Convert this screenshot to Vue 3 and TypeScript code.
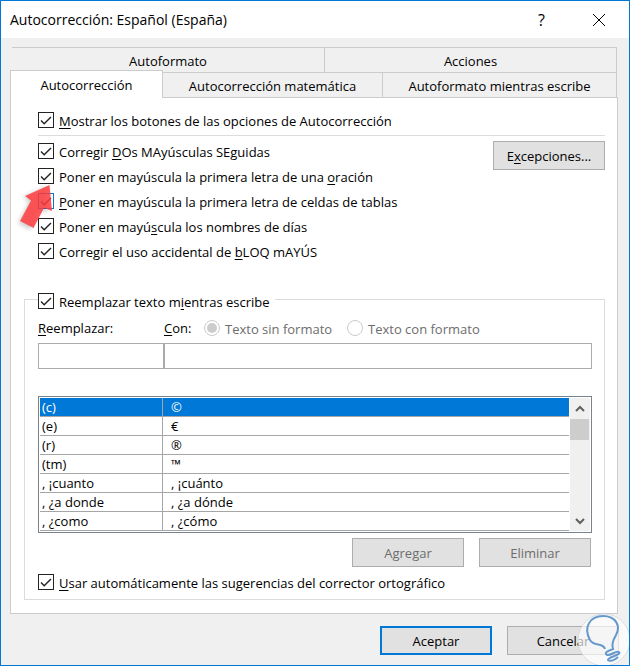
<script setup lang="ts">
import { ref } from 'vue'

interface Mnemonic {
  before: string
  key: string
  after: string
}

interface Option extends Mnemonic {
  id: string
  checked: boolean
  focused?: boolean
}

interface Entry {
  from: string
  to: string
}

const upperTabs: string[] = ['Autoformato', 'Acciones']
const lowerTabs: string[] = ['Autocorrección', 'Autocorrección matemática', 'Autoformato mientras escribe']
const activeTab = ref('Autocorrección')

const showButtons = ref(true)
const replaceText = ref(true)
const useSpelling = ref(true)
const format = ref('plain')
const replaceFrom = ref('')
const replaceTo = ref('')
const selected = ref(0)

const options = ref<Option[]>([
  { id: 'two-caps', before: 'Corregir ', key: 'D', after: 'Os MAyúsculas SEguidas', checked: true },
  { id: 'sentence', before: 'Poner en mayúscula la primera letra de una ', key: 'o', after: 'ración', checked: true },
  { id: 'cells', before: '', key: 'P', after: 'oner en mayúscula la primera letra de celdas de tablas', checked: true, focused: true },
  { id: 'days', before: 'Poner en mayú', key: 's', after: 'cula los nombres de días', checked: true },
  { id: 'caps-lock', before: 'Corregir el uso accidental de ', key: 'b', after: 'LOQ mAYÚS', checked: true },
])

const entries: Entry[] = [
  { from: '(c)', to: '©' },
  { from: '(e)', to: '€' },
  { from: '(r)', to: '®' },
  { from: '(tm)', to: '™' },
  { from: ', ¡cuanto', to: ', ¡cuánto' },
  { from: ', ¿a donde', to: ', ¿a dónde' },
  { from: ', ¿como', to: ', ¿cómo' },
]
</script>

<template>
  <main class="dialog">
    <header class="titlebar">
      <h1>Autocorrección: Español (España)</h1>
      <button class="caption-button" type="button" aria-label="Ayuda">?</button>
      <button class="caption-button" type="button" aria-label="Cerrar">
        <svg width="14" height="14" viewBox="0 0 14 14"><path d="M1 1L13 13M13 1L1 13" /></svg>
      </button>
    </header>

    <div class="body">
      <div class="tabs" role="tablist">
        <div class="tab-row upper">
          <button v-for="tab in upperTabs" :key="tab" type="button" role="tab" class="tab">{{ tab }}</button>
        </div>
        <div class="tab-row lower">
          <button
            v-for="tab in lowerTabs"
            :key="tab"
            type="button"
            role="tab"
            class="tab"
            :class="{ active: tab === activeTab }"
            :aria-selected="tab === activeTab"
          >{{ tab }}</button>
        </div>
      </div>

      <section class="panel">
        <div class="show-row">
          <label class="check">
            <span class="box">
              <input v-model="showButtons" type="checkbox" />
              <svg viewBox="0 0 16 16"><path d="M3 8.5L6.2 11.7L13 5" /></svg>
            </span>
            <span class="text"><u>M</u>ostrar los botones de las opciones de Autocorrección</span>
          </label>
        </div>

        <div class="options">
          <div class="option-list">
            <label v-for="option in options" :key="option.id" class="check">
              <span class="box" :class="{ focused: option.focused }">
                <input v-model="option.checked" type="checkbox" />
                <svg viewBox="0 0 16 16"><path d="M3 8.5L6.2 11.7L13 5" /></svg>
              </span>
              <span class="text">{{ option.before }}<u>{{ option.key }}</u>{{ option.after }}</span>
            </label>
          </div>
          <button class="push" type="button"><span>E<u>x</u>cepciones...</span></button>
        </div>

        <fieldset class="group">
          <legend>
            <label class="check">
              <span class="box">
                <input v-model="replaceText" type="checkbox" />
                <svg viewBox="0 0 16 16"><path d="M3 8.5L6.2 11.7L13 5" /></svg>
              </span>
              <span class="text">Reemplazar texto m<u>i</u>entras escribe</span>
            </label>
          </legend>

          <div class="columns captions">
            <label for="replace-from"><u>R</u>eemplazar:</label>
            <div class="with">
              <label for="replace-to" class="with-label"><u>C</u>on:</label>
              <label class="radio"><input v-model="format" type="radio" value="plain" disabled /><span>Texto sin formato</span></label>
              <label class="radio"><input v-model="format" type="radio" value="rich" disabled /><span>Texto con formato</span></label>
            </div>
          </div>
          <div class="columns">
            <input id="replace-from" v-model="replaceFrom" class="field" type="text" />
            <input id="replace-to" v-model="replaceTo" class="field" type="text" />
          </div>

          <div class="list">
            <table>
              <tbody>
                <tr
                  v-for="(entry, index) in entries"
                  :key="entry.from"
                  :class="{ selected: index === selected }"
                  @click="selected = index"
                >
                  <td>{{ entry.from }}</td>
                  <td>{{ entry.to }}</td>
                </tr>
              </tbody>
            </table>
            <div class="scrollbar">
              <button type="button" aria-label="Subir">
                <svg width="10" height="8" viewBox="0 0 10 8"><path d="M1 6L5 2L9 6" /></svg>
              </button>
              <div class="track"><div class="thumb"></div></div>
              <button type="button" aria-label="Bajar">
                <svg width="10" height="8" viewBox="0 0 10 8"><path d="M1 2L5 6L9 2" /></svg>
              </button>
            </div>
          </div>

          <div class="actions list-actions">
            <button class="push" type="button" disabled>Agregar</button>
            <button class="push" type="button" disabled>Eliminar</button>
          </div>

          <label class="check">
            <span class="box">
              <input v-model="useSpelling" type="checkbox" />
              <svg viewBox="0 0 16 16"><path d="M3 8.5L6.2 11.7L13 5" /></svg>
            </span>
            <span class="text"><u>U</u>sar automáticamente las sugerencias del corrector ortográfico</span>
          </label>
        </fieldset>
      </section>

      <footer class="actions footer">
        <button class="push default" type="button">Aceptar</button>
        <button class="push" type="button">Cancelar</button>
      </footer>
    </div>

    <svg class="pointer" width="44" height="52" viewBox="0 0 44 52" aria-hidden="true">
      <path class="shadow" d="M35 6L11 17L17 22L6 43L18 50L28 31L36 32Z" />
      <path class="arrow" d="M37.5 5L13 16L19 20.5L8 41L21.5 48L32 28L40 31Z" />
    </svg>

    <svg class="watermark" width="54" height="54" viewBox="0 0 54 54" aria-hidden="true">
      <circle cx="28" cy="28" r="26" />
      <path d="M29 37C27 30 18 35 14 28C7 15 14 4 27 4C40 4 45 14 40 23C36 30 36 33 37 37C31 39 28 41 31 43C35 44 40 38 43 40C46 43 31 45 32 48C34 50 39 48 42 45" />
    </svg>
  </main>
</template>

<style>
body {
  margin: 0;
}
</style>

<style scoped>
.dialog {
  box-sizing: border-box;
  position: relative;
  display: flex;
  flex-direction: column;
  min-height: 100vh;
  overflow: hidden;
  border: 1px solid #0078d7;
  background: #f0f0f0;
  color: #000;
  font-family: "Open Sans", "Noto Sans", sans-serif;
  font-size: 13px;
  line-height: 18px;
}

button,
input {
  box-sizing: border-box;
  margin: 0;
  font: inherit;
  color: inherit;
}

u {
  text-decoration-thickness: 1px;
  text-underline-offset: 2px;
}

.titlebar {
  display: flex;
  align-items: center;
  height: 37px;
  padding: 0 2px 0 9px;
  background: #fff;
}

.titlebar h1 {
  flex: 1;
  margin: 0;
  font-size: 14px;
  font-weight: 400;
}

.caption-button {
  display: grid;
  place-items: center;
  width: 57px;
  height: 36px;
  padding: 0;
  border: 0;
  background: none;
  font-size: 16px;
}

.caption-button svg {
  fill: none;
  stroke: #000;
}

.body {
  display: flex;
  flex: 1;
  flex-direction: column;
  padding: 9px 10px 10px 9px;
}

.tab-row {
  display: grid;
}

.upper {
  grid-template-columns: 313fr 292fr;
  margin: 0 2px 0 2px;
}

.lower {
  grid-template-columns: 153fr 220fr 234fr;
  margin-right: 2px;
}

.tab {
  height: 25px;
  padding: 2px 0 0;
  border: 0 solid #ccc;
  border-width: 1px 1px 0 0;
  background: #f0f0f0;
}

.tab.active {
  z-index: 1;
  height: 28px;
  margin: -2px 0 -1px;
  padding: 0;
  border-left-width: 1px;
  background: #fff;
}

.panel {
  margin-right: 1px;
  padding: 9px 12px 13px 13px;
  border: 1px solid #ccc;
  background: #fff;
}

.check {
  display: flex;
  align-items: center;
  height: 25px;
}

.text {
  padding: 2px 0 0 5px;
}

.box {
  display: grid;
  width: 16px;
  height: 16px;
  color: #222;
}

.box input {
  grid-area: 1 / 1;
  width: 16px;
  height: 16px;
  border: 1px solid;
  background: #fff;
  appearance: none;
}

.box.focused input {
  border-color: #0078d7;
}

.box svg {
  grid-area: 1 / 1;
  fill: none;
  stroke: currentColor;
  stroke-width: 1.4;
  pointer-events: none;
}

.box input:not(:checked) + svg {
  visibility: hidden;
}

.show-row {
  padding-bottom: 3px;
  margin-left: 14px;
  border-bottom: 1px solid #dcdcdc;
}

.options {
  display: flex;
  justify-content: space-between;
  align-items: flex-start;
  padding: 2px 0 0 14px;
}

.option-list {
  flex: 1;
}

.push {
  width: 112px;
  height: 29px;
  padding: 1px 0 0;
  border: 1px solid #adadad;
  background: #e1e1e1;
}

.options .push {
  margin: 3px 0 0;
}

.push:disabled {
  color: #6d6d6d;
}

.push.default {
  border: 2px solid #0078d7;
}

.group {
  min-width: 0;
  margin: 26px 0 0;
  padding: 5px 12px 5px 13px;
  border: 1px solid #dcdcdc;
}

.group legend {
  padding: 4px 5px 0 0;
}

.group legend .check {
  height: 16px;
}

.columns {
  display: grid;
  grid-template-columns: 126fr 428fr;
}

.captions {
  align-items: center;
  height: 27px;
  padding-bottom: 2px;
}

.with {
  display: flex;
  align-items: center;
}

.with-label {
  width: 40px;
}

.radio {
  display: flex;
  align-items: center;
  width: 143px;
  color: #6d6d6d;
}

.radio input {
  width: 16px;
  height: 16px;
  border: 1px solid #ccc;
  border-radius: 50%;
  background: #fff;
  appearance: none;
}

.radio input:checked {
  padding: 2px;
  background: #ccc content-box;
}

.radio span {
  padding: 2px 0 0 5px;
}

.field {
  min-width: 0;
  height: 26px;
  padding: 0 4px;
  border: 1px solid #ababab;
  background: #fff;
}

.list {
  display: flex;
  margin-top: 27px;
  padding: 1px;
  border: 1px solid #7a828c;
}

table {
  flex: 1;
  border-spacing: 0;
}

td {
  height: 18px;
  padding: 0 0 0 8px;
  border-bottom: 1px solid #a6a6a6;
  line-height: 18px;
}

td:first-child {
  width: 120px;
  padding-left: 2px;
  border-right: 1px solid #a6a6a6;
}

.selected td {
  background: #0078d7;
  color: #fff;
}

.scrollbar {
  display: flex;
  flex-direction: column;
  width: 20px;
  margin-left: 1px;
  background: #f0f0f0;
}

.scrollbar button {
  display: grid;
  place-items: center;
  height: 21px;
  padding: 0;
  border: 0;
  background: none;
}

.scrollbar svg {
  fill: none;
  stroke: #606060;
  stroke-width: 2;
}

.track {
  flex: 1;
}

.thumb {
  height: 21px;
  margin-right: 1px;
  background: #cdcdcd;
}

.actions {
  display: flex;
  justify-content: flex-end;
  gap: 15px;
}

.list-actions {
  padding: 5px 1px 2px;
}

.footer {
  margin-top: auto;
}

.pointer {
  position: absolute;
  top: 179px;
  left: 11px;
}

.shadow {
  fill: #000;
  opacity: 0.18;
  filter: blur(2px);
}

.arrow {
  fill: #ff3c40;
  fill-opacity: 0.85;
}

.watermark {
  position: absolute;
  right: -1px;
  bottom: -1px;
  pointer-events: none;
}

.watermark circle {
  fill: #fff;
  fill-opacity: 0.65;
  stroke: #c9ccd6;
  stroke-opacity: 0.6;
}

.watermark path {
  fill: none;
  stroke: #6599cc;
  stroke-width: 2;
}
</style>
